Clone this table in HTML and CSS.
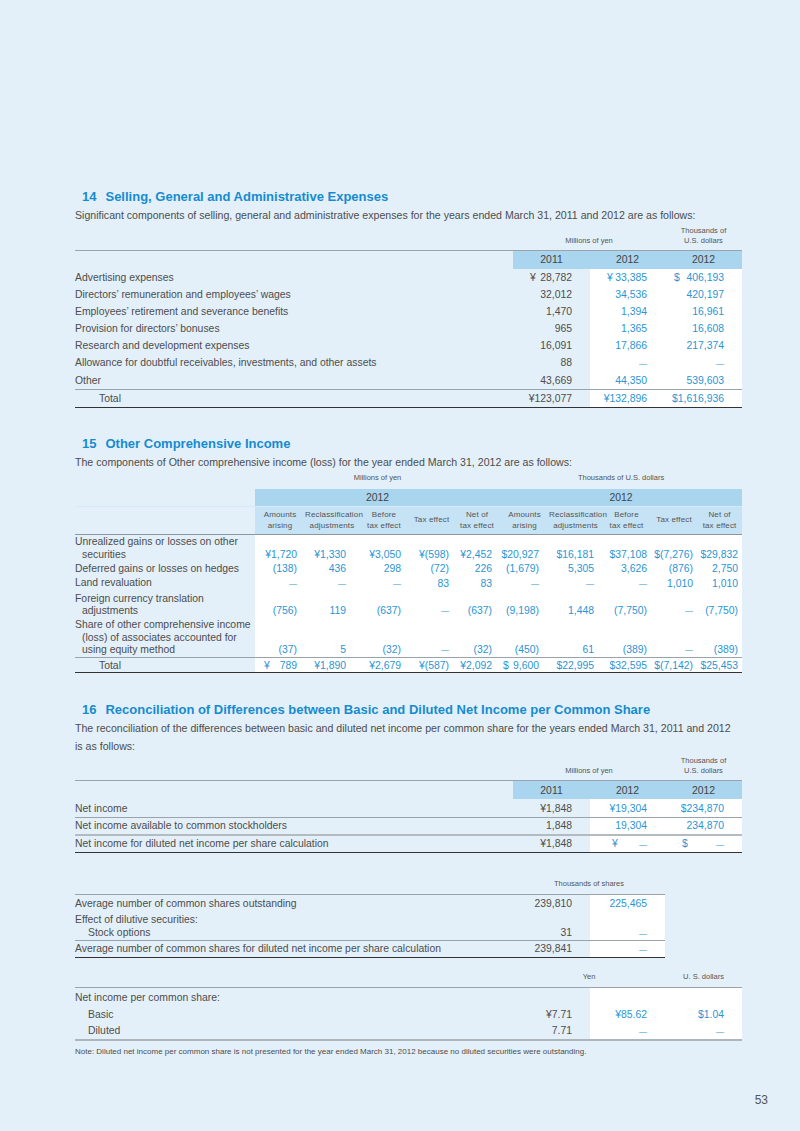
FILE: index.html
```html
<!DOCTYPE html>
<html lang="en">
<head>
<meta charset="utf-8">
<title>Notes 14–16</title>
<link rel="stylesheet" href="styles.css">
</head>
<body>
<div class="page">

<section class="note">
  <h2 class="note-title"><span class="num">14</span>Selling, General and Administrative Expenses</h2>
  <p class="desc">Significant components of selling, general and administrative expenses for the years ended March 31, 2011 and 2012 are as follows:</p>
  <table class="fin t4">
    <colgroup><col class="w-lbl"><col class="w77"><col class="w75"><col class="w77"></colgroup>
    <thead>
      <tr class="units"><th></th><th colspan="2">Millions of yen</th><th>Thousands of<br>U.S. dollars</th></tr>
      <tr class="years"><th class="blank"></th><th>2011</th><th>2012</th><th>2012</th></tr>
    </thead>
    <tbody>
      <tr><td class="lbl">Advertising expenses</td><td class="pl17"><span class="c">¥</span>28,782</td><td class="hl pl17"><span class="c">¥</span>33,385</td><td class="hl pl9"><span class="c">$</span>406,193</td></tr>
      <tr><td class="lbl">Directors’ remuneration and employees’ wages</td><td>32,012</td><td class="hl">34,536</td><td class="hl">420,197</td></tr>
      <tr><td class="lbl">Employees’ retirement and severance benefits</td><td>1,470</td><td class="hl">1,394</td><td class="hl">16,961</td></tr>
      <tr><td class="lbl">Provision for directors’ bonuses</td><td>965</td><td class="hl">1,365</td><td class="hl">16,608</td></tr>
      <tr><td class="lbl">Research and development expenses</td><td>16,091</td><td class="hl">17,866</td><td class="hl">217,374</td></tr>
      <tr><td class="lbl">Allowance for doubtful receivables, investments, and other assets</td><td>88</td><td class="hl"><span class="d">—</span></td><td class="hl"><span class="d">—</span></td></tr>
      <tr><td class="lbl">Other</td><td>43,669</td><td class="hl">44,350</td><td class="hl">539,603</td></tr>
      <tr class="total"><td class="lbl ind">Total</td><td>¥123,077</td><td class="hl">¥132,896</td><td class="hl">$1,616,936</td></tr>
    </tbody>
  </table>
</section>

<section class="note">
  <h2 class="note-title"><span class="num">15</span>Other Comprehensive Income</h2>
  <p class="desc">The components of Other comprehensive income (loss) for the year ended March 31, 2012 are as follows:</p>
  <table class="fin t15">
    <colgroup><col class="w180"><col class="w50"><col class="w54"><col class="w50"><col class="w45"><col class="w46"><col class="w49"><col class="w53"><col class="w49"><col class="w46"><col class="w45"></colgroup>
    <thead>
      <tr class="units"><th></th><th colspan="5">Millions of yen</th><th colspan="5">Thousands of U.S. dollars</th></tr>
      <tr class="years"><th class="blank"></th><th colspan="5">2012</th><th colspan="5">2012</th></tr>
      <tr class="sub"><th class="blank"></th>
        <th>Amounts<br>arising</th><th>Reclassification<br>adjustments</th><th>Before<br>tax effect</th><th>Tax effect</th><th>Net of<br>tax effect</th>
        <th>Amounts<br>arising</th><th>Reclassification<br>adjustments</th><th>Before<br>tax effect</th><th>Tax effect</th><th>Net of<br>tax effect</th>
      </tr>
    </thead>
    <tbody>
      <tr><td class="lbl">Unrealized gains or losses on other<br>securities</td><td>¥1,720</td><td>¥1,330</td><td>¥3,050</td><td>¥(598)</td><td>¥2,452</td><td>$20,927</td><td>$16,181</td><td>$37,108</td><td>$(7,276)</td><td>$29,832</td></tr>
      <tr><td class="lbl">Deferred gains or losses on hedges</td><td>(138)</td><td>436</td><td>298</td><td>(72)</td><td>226</td><td>(1,679)</td><td>5,305</td><td>3,626</td><td>(876)</td><td>2,750</td></tr>
      <tr><td class="lbl">Land revaluation</td><td><span class="d">—</span></td><td><span class="d">—</span></td><td><span class="d">—</span></td><td>83</td><td>83</td><td><span class="d">—</span></td><td><span class="d">—</span></td><td><span class="d">—</span></td><td>1,010</td><td>1,010</td></tr>
      <tr><td class="lbl">Foreign currency translation<br>adjustments</td><td>(756)</td><td>119</td><td>(637)</td><td><span class="d">—</span></td><td>(637)</td><td>(9,198)</td><td>1,448</td><td>(7,750)</td><td><span class="d">—</span></td><td>(7,750)</td></tr>
      <tr><td class="lbl">Share of other comprehensive income<br>(loss) of associates accounted for<br>using equity method</td><td>(37)</td><td>5</td><td>(32)</td><td><span class="d">—</span></td><td>(32)</td><td>(450)</td><td>61</td><td>(389)</td><td><span class="d">—</span></td><td>(389)</td></tr>
      <tr class="total"><td class="lbl ind">Total</td><td><span class="c">¥</span>789</td><td>¥1,890</td><td>¥2,679</td><td>¥(587)</td><td>¥2,092</td><td><span class="c">$</span>9,600</td><td>$22,995</td><td>$32,595</td><td>$(7,142)</td><td>$25,453</td></tr>
    </tbody>
  </table>
</section>

<section class="note">
  <h2 class="note-title"><span class="num">16</span>Reconciliation of Differences between Basic and Diluted Net Income per Common Share</h2>
  <p class="desc">The reconciliation of the differences between basic and diluted net income per common share for the years ended March 31, 2011 and 2012<br>is as follows:</p>
  <table class="fin t4 t16a">
    <colgroup><col class="w-lbl"><col class="w77"><col class="w75"><col class="w77"></colgroup>
    <thead>
      <tr class="units"><th></th><th colspan="2">Millions of yen</th><th>Thousands of<br>U.S. dollars</th></tr>
      <tr class="years"><th class="blank"></th><th>2011</th><th>2012</th><th>2012</th></tr>
    </thead>
    <tbody>
      <tr class="r1"><td class="lbl">Net income</td><td>¥1,848</td><td class="hl">¥19,304</td><td class="hl">$234,870</td></tr>
      <tr class="r2"><td class="lbl">Net income available to common stockholders</td><td>1,848</td><td class="hl">19,304</td><td class="hl">234,870</td></tr>
      <tr class="r3"><td class="lbl">Net income for diluted net income per share calculation</td><td>¥1,848</td><td class="hl pl22"><span class="c">¥</span><span class="d">—</span></td><td class="hl pl17"><span class="c">$</span><span class="d">—</span></td></tr>
    </tbody>
  </table>

  <table class="fin t16b">
    <colgroup><col class="w-lbl"><col class="w77"><col class="w75"></colgroup>
    <thead>
      <tr class="units"><th></th><th colspan="2">Thousands of shares</th></tr>
    </thead>
    <tbody>
      <tr class="s1"><td class="lbl">Average number of common shares outstanding</td><td>239,810</td><td class="hl">225,465</td></tr>
      <tr class="s2"><td class="lbl">Effect of dilutive securities:</td><td></td><td class="hl"></td></tr>
      <tr class="s3"><td class="lbl ind2">Stock options</td><td>31</td><td class="hl"><span class="d">—</span></td></tr>
      <tr class="s4"><td class="lbl">Average number of common shares for diluted net income per share calculation</td><td>239,841</td><td class="hl"><span class="d">—</span></td></tr>
    </tbody>
  </table>

  <table class="fin t16c">
    <colgroup><col class="w-lbl"><col class="w77"><col class="w75"><col class="w77"></colgroup>
    <thead>
      <tr class="units"><th></th><th colspan="2">Yen</th><th>U. S. dollars</th></tr>
    </thead>
    <tbody>
      <tr class="e1"><td class="lbl">Net income per common share:</td><td></td><td class="hl"></td><td class="hl"></td></tr>
      <tr><td class="lbl ind2">Basic</td><td>¥7.71</td><td class="hl">¥85.62</td><td class="hl">$1.04</td></tr>
      <tr class="e3"><td class="lbl ind2">Diluted</td><td>7.71</td><td class="hl"><span class="d">—</span></td><td class="hl"><span class="d">—</span></td></tr>
    </tbody>
  </table>
  <p class="fn">Note: Diluted net income per common share is not presented for the year ended March 31, 2012 because no diluted securities were outstanding.</p>
</section>

<footer class="folio">53</footer>
</div>
</body>
</html>
```

FILE: styles.css
```css
* { box-sizing: border-box; }
html, body { margin: 0; padding: 0; }
body {
  background: #e3f0f9;
  font-family: "Liberation Sans", Arial, Helvetica, sans-serif;
  color: #4d4d4d;
}
.page {
  width: 800px;
  height: 1131px;
  padding: 188px 58px 24px 75px;
  display: flex;
  flex-direction: column;
}
.note + .note { margin-top: 27px; }
.note:nth-of-type(3) { margin-top: 28px; }

.note-title {
  margin: 0;
  padding-left: 7px;
  font-size: 13px;
  line-height: 18px;
  font-weight: bold;
  color: #168bd0;
}
.note-title .num { margin-right: 9px; }
.desc {
  margin: 0;
  font-size: 10.6px;
  line-height: 18px;
  color: #4d4d4d;
  white-space: nowrap;
}

/* tables */
table.fin {
  border-collapse: collapse;
  table-layout: fixed;
  width: 667px;
  font-size: 10.4px;
  color: #4d4d4d;
}
.w-lbl { width: 438px; }
.w77 { width: 77px; }
.w75 { width: 75px; }
.w180 { width: 180px; }
.w50 { width: 50px; }
.w54 { width: 54px; }
.w45 { width: 45px; }
.w46 { width: 46px; }
.w49 { width: 49px; }
.w53 { width: 53px; }

.units th {
  font-size: 7.5px;
  line-height: 10px;
  font-weight: normal;
  color: #555;
  text-align: center;
  vertical-align: bottom;
  padding: 2px 0 4px;
}
.years th {
  background: #a9d5ef;
  font-weight: normal;
  font-size: 10.4px;
  color: #444;
  text-align: center;
  height: 18px;
  padding: 0;
}
.years th.blank { background: transparent; }
.t4 .years th, .t16a .years th { border-top: 1px solid #9aa3a9; }

table.fin td {
  height: 17px;
  line-height: 17px;
  padding: 0 18px 0 0;
  text-align: right;
  white-space: nowrap;
  vertical-align: middle;
}
table.fin td.lbl {
  text-align: left;
  padding: 0;
  white-space: nowrap;
}
table.fin td.lbl.ind { padding-left: 24px; }
table.fin td.lbl.ind2 { padding-left: 13px; }
table.fin td.hl { background: #fff; color: #2a95d4; }
.c { float: left; }
table.fin td.pl9 { padding-left: 9px; }
table.fin td.pl17 { padding-left: 17px; }
table.fin td.pl22 { padding-left: 22px; }
.d { font-size: 8px; }

.t4 .total td { border-top: 1px solid #9aa3a9; border-bottom: 1px solid #333; }

/* note 15 */
.t15 .units th { padding: 2px 0 6px; }
.t15 .years th { height: 18px; border-bottom: 1px solid #d4eaf7; }
.t15 .sub th {
  background: #c6e3f5;
  font-size: 8px;
  letter-spacing: 0.15px;
  line-height: 10.5px;
  font-weight: normal;
  color: #555;
  text-align: center;
  vertical-align: middle;
  padding: 3px 0;
  height: 27px;
  border-bottom: 1px solid #8e979d;
  white-space: nowrap;
}
.t15 .sub th.blank { background: transparent; }
.t15 td {
  background: #fff;
  color: #2a95d4;
}
table.fin.t15 td {
  height: auto;
  line-height: 12.4px;
  padding-top: 1.4px;
  padding-bottom: 0.5px;
  vertical-align: bottom;
}
table.fin.t15 td.lbl {
  background: transparent;
  color: #4d4d4d;
  vertical-align: top;
  padding-left: 7px;
  text-indent: -7px;
}
table.fin.t15 td.lbl.ind { padding-left: 24px; text-indent: 0; }
table.fin.t15 td:nth-child(2) { padding-right: 8px; }
table.fin.t15 td:nth-child(3) { padding-right: 13px; }
table.fin.t15 td:nth-child(4) { padding-right: 8px; }
table.fin.t15 td:nth-child(5) { padding-right: 5px; }
table.fin.t15 td:nth-child(6) { padding-right: 8px; }
table.fin.t15 td:nth-child(7) { padding-right: 10px; }
table.fin.t15 td:nth-child(8) { padding-right: 8px; }
table.fin.t15 td:nth-child(9) { padding-right: 4px; }
table.fin.t15 td:nth-child(10) { padding-right: 4px; }
table.fin.t15 td:nth-child(11) { padding-right: 4px; }
table.fin.t15 .total td:nth-child(2) { padding-left: 9px; }
table.fin.t15 .total td:nth-child(7) { padding-left: 3px; }
.t15 .total td { border-top: 1px solid #9aa3a9; border-bottom: 1px solid #333; }

/* note 16 */
.t16a .units th { padding: 1px 0 4px; }
table.fin.t16a .r1 td { height: 18px; line-height: 16px; padding-top: 2px; border-bottom: 1px solid #9aa3a9; }
table.fin.t16a .r2 td { height: 16px; line-height: 16px; border-bottom: 2px solid #b3bbc1; }
table.fin.t16a .r3 td { height: 15px; line-height: 15px; border-bottom: 1px solid #333; }

.t16b { margin-top: 26px; }
table.fin.t16b { width: 590px; }
.t16b .units th { padding: 0 0 5px; }
table.fin.t16b .s1 td { height: 17px; line-height: 17px; border-top: 1px solid #9aa3a9; }
table.fin.t16b .s2 td { height: 15px; line-height: 15px; }
table.fin.t16b .s3 td { height: 12px; line-height: 12px; }
table.fin.t16b .s4 td { height: 15px; line-height: 15px; border-top: 1px solid #9aa3a9; border-bottom: 1px solid #333; }

.t16c { margin-top: 14px; }
.t16c .units th { padding: 0 0 5px; }
table.fin.t16c .e1 td { height: 18px; line-height: 17px; padding-top: 1px; border-top: 1px solid #9aa3a9; }
table.fin.t16c .e3 td { height: 15px; line-height: 15px; border-bottom: 2px solid #adb5bb; }

.fn {
  margin: 5px 0 0;
  font-size: 8px;
  line-height: 12px;
  color: #4d4d4d;
}

.folio {
  margin-top: auto;
  align-self: flex-end;
  margin-right: -26px;
  font-size: 12px;
  line-height: 14px;
  color: #555;
}
```
